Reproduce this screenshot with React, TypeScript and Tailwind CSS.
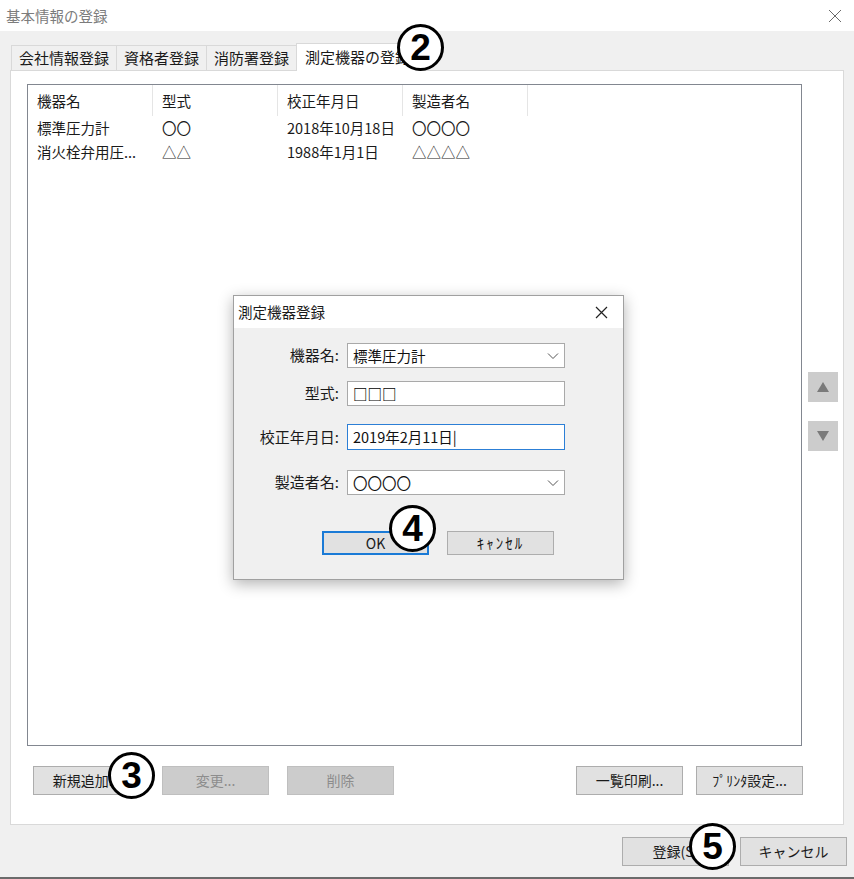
import React from "react";

const jp = { fontFamily: '"Noto Sans CJK JP", "Noto Sans", sans-serif' };

function Badge({ n, className }: { n: string; className: string }) {
  return (
    <div
      className={`absolute w-[47px] h-[47px] rounded-full border-[3px] border-black bg-white flex items-center justify-center ${className}`}
    >
      <span className="text-[37px] font-bold leading-none text-black" style={{ fontFamily: '"Liberation Sans", Arial, sans-serif' }}>
        {n}
      </span>
    </div>
  );
}

function Btn({ label, disabled, className = "" }: { label: string; disabled?: boolean; className?: string }) {
  return (
    <button
      className={`h-[29px] w-[107px] border flex items-center justify-center text-[14px] ${
        disabled ? "bg-[#cccccc] border-[#bfbfbf] text-[#8d8d8d]" : "bg-[#e1e1e1] border-[#adadad] text-[#1a1a1a]"
      } ${className}`}
    >
      {label}
    </button>
  );
}

function Chevron() {
  return (
    <svg width="12" height="8" viewBox="0 0 12 8" className="mr-[5px]">
      <path d="M1 1.5 L6 6.5 L11 1.5" fill="none" stroke="#555" strokeWidth="1" />
    </svg>
  );
}

export default function App() {
  const rows = [
    ["標準圧力計", "〇〇", "2018年10月18日", "〇〇〇〇"],
    ["消火栓弁用圧...", "△△", "1988年1月1日", "△△△△"],
  ];

  return (
    <div className="relative w-[854px] h-[879px] bg-[#f0f0f0] border-b-2 border-[#6b6b6b] overflow-hidden" style={jp}>
      {/* Title bar */}
      <div className="h-[31px] bg-white flex items-center justify-between pl-[6px] pr-[12px]">
        <span className="text-[14.5px] text-[#7c7c7c]">基本情報の登録</span>
        <svg width="14" height="14" viewBox="0 0 14 14">
          <path d="M1 1 L13 13 M13 1 L1 13" stroke="#6a6a6a" strokeWidth="1" />
        </svg>
      </div>

      <div className="pl-[10px] pr-[10px] pt-[11px]">
        {/* Tabs */}
        <div className="flex items-end h-[28px] pl-[1px]">
          {["会社情報登録", "資格者登録", "消防署登録"].map((t) => (
            <div
              key={t}
              className="h-[25px] px-[7px] border border-b-0 border-[#d9d9d9] -mr-[1px] bg-[#f0f0f0] flex items-center text-[15px] text-[#1a1a1a]"
            >
              {t}
            </div>
          ))}
          <div className="relative z-10 h-[28px] px-[8px] border border-b-0 border-[#d9d9d9] bg-white flex items-center text-[15px] text-[#1a1a1a] -mb-[1px] whitespace-nowrap">
            測定機器の登録
          </div>
        </div>

        {/* Tab panel */}
        <div className="h-[755px] border border-[#d9d9d9] bg-white pt-[13px] pl-[16px] pr-[5px] flex flex-col">
          <div className="flex">
            {/* List */}
            <div className="w-[776px] h-[662px] border border-[#828790] bg-white">
              <div className="flex h-[31px] items-center text-[14.5px] text-[#1a1a1a]">
                {["機器名", "型式", "校正年月日", "製造者名"].map((h) => (
                  <div key={h} className="w-[125px] h-full flex items-center pl-[9px] border-r border-[#e5e5e5]">
                    {h}
                  </div>
                ))}
              </div>
              {rows.map((r) => (
                <div key={r[0]} className="flex h-[24px] items-center text-[14.5px] text-[#1a1a1a]">
                  {r.map((c, i) => (
                    <div key={i} className="w-[125px] pl-[9px] whitespace-nowrap overflow-hidden">
                      {c}
                    </div>
                  ))}
                </div>
              ))}
            </div>
            {/* Order buttons */}
            <div className="flex flex-col gap-[19px] pl-[6px] pt-[288px]">
              <div className="w-[30px] h-[30px] bg-[#cccccc] flex items-center justify-center">
                <svg width="14" height="12" viewBox="0 0 14 12">
                  <path d="M7 1 L13 11 L1 11 Z" fill="#7a7a7a" />
                </svg>
              </div>
              <div className="w-[30px] h-[30px] bg-[#cccccc] flex items-center justify-center">
                <svg width="14" height="12" viewBox="0 0 14 12">
                  <path d="M1 1 L13 1 L7 11 Z" fill="#7a7a7a" />
                </svg>
              </div>
            </div>
          </div>

          <div className="flex mt-[20px] pl-[6px] pr-[35px]">
            <Btn label="新規追加..." />
            <Btn label="変更..." disabled className="ml-[22px]" />
            <Btn label="削除" disabled className="ml-[18px]" />
            <div className="flex-1" />
            <Btn label="一覧印刷..." />
            <Btn label="ﾌﾟﾘﾝﾀ設定..." className="ml-[13px]" />
          </div>
        </div>

        {/* Bottom buttons */}
        <div className="flex justify-end gap-[11px] mt-[12px] -mr-[3px]">
          <Btn label="登録(S)" />
          <Btn label="キャンセル" />
        </div>
      </div>

      {/* Dialog */}
      <div className="absolute left-[233px] top-[295px] w-[391px] h-[285px] border border-[#a0a0a0] bg-[#f0f0f0] shadow-[0_4px_14px_rgba(0,0,0,0.3)] flex flex-col">
        <div className="h-[32px] bg-white flex items-center justify-between pl-[4px] pr-[15px]">
          <span className="text-[14.5px] text-[#1a1a1a]">測定機器登録</span>
          <svg width="13" height="13" viewBox="0 0 13 13">
            <path d="M1 1 L12 12 M12 1 L1 12" stroke="#222" strokeWidth="1.2" />
          </svg>
        </div>
        <div className="flex flex-col pl-[10px] pt-[15px]">
          {[
            { l: "機器名:", v: "標準圧力計", sel: true, mt: "" },
            { l: "型式:", v: "□□□", bold: true, mt: "mt-[13px]" },
            { l: "校正年月日:", v: "2019年2月11日|", focus: true, mt: "mt-[18px]" },
            { l: "製造者名:", v: "〇〇〇〇", sel: true, mt: "mt-[20px]" },
          ].map((f) => (
            <div key={f.l} className={`flex items-center ${f.mt}`}>
              <div className="w-[103px] text-right text-[15px] text-[#1a1a1a] pr-[8px]">{f.l}</div>
              <div
                className={`w-[218px] h-[25px] bg-white flex items-center justify-between pl-[5px] text-[14.5px] text-[#111] border ${
                  f.focus ? "border-[#2c7fd6] h-[26px]" : "border-[#a9a9a9]"
                }`}
              >
                <span className={f.bold ? "font-bold text-black" : ""}>{f.v}</span>
                {f.sel && <Chevron />}
              </div>
            </div>
          ))}
          <div className="flex mt-[36px] pl-[78px] gap-[18px]">
            <button className="w-[107px] h-[24px] bg-[#e1e1e1] border-2 border-[#1a7ad6] text-[14px] text-[#1a1a1a] flex items-center justify-center">
              OK
            </button>
            <button className="w-[107px] h-[24px] bg-[#e1e1e1] border border-[#adadad] text-[15px] tracking-[2px] text-[#1a1a1a] flex items-center justify-center">
              ｷｬﾝｾﾙ
            </button>
          </div>
        </div>
      </div>

      {/* Annotation markers */}
      <Badge n="2" className="left-[397px] top-[24px] z-20" />
      <Badge n="3" className="left-[108px] top-[752px] z-20" />
      <Badge n="4" className="left-[389px] top-[505px] z-20" />
      <Badge n="5" className="left-[689px] top-[823px] z-20" />
    </div>
  );
}
